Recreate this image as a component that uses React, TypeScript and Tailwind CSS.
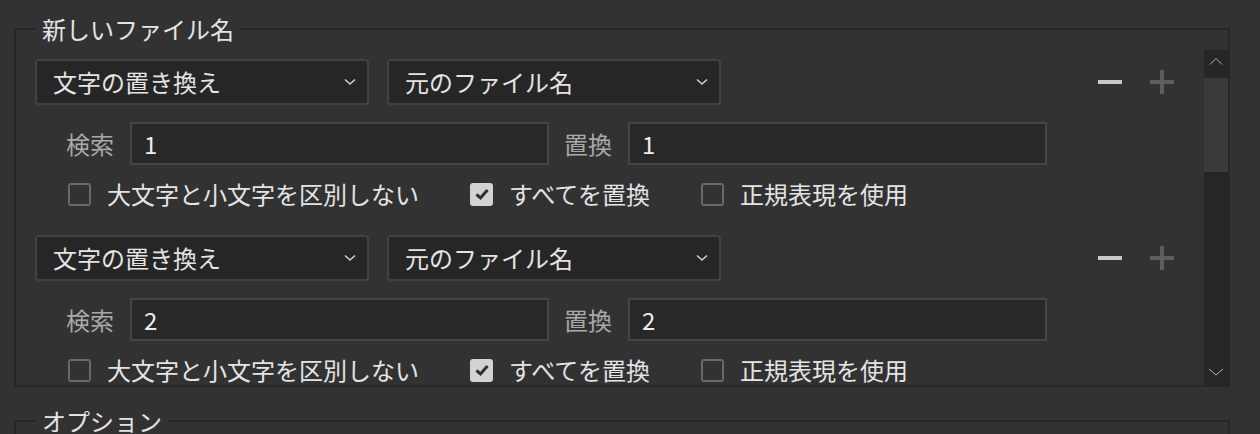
import { useState } from "react";

type Rule = { find: string; replace: string };

const font = { fontFamily: '"Noto Sans CJK JP", "Noto Sans", sans-serif' };

function Chevron() {
  return (
    <svg width="12" height="8" viewBox="0 0 12 8" className="shrink-0">
      <path d="M1 1.5 L6 6 L11 1.5" fill="none" stroke="#cfcfcf" strokeWidth="1.6" />
    </svg>
  );
}

function Select({ label }: { label: string }) {
  return (
    <div className="flex h-[46px] w-[334px] items-center justify-between rounded-[4px] border-2 border-[#424242] bg-[#262626] pl-[16px] pr-[11px] text-[24px] leading-none text-[#e4e4e4]">
      <span>{label}</span>
      <Chevron />
    </div>
  );
}

function TextField({ label, value }: { label: string; value: string }) {
  return (
    <div className="flex items-center">
      <span className="w-[48px] text-[24px] leading-none text-[#a9a9a9]">{label}</span>
      <div className="ml-[16px] flex h-[43px] w-[419px] items-center border-2 border-[#454545] bg-[#282828] pl-[12px] text-[24px] leading-none text-[#ececec]">
        {value}
      </div>
    </div>
  );
}

function Check({ label, checked }: { label: string; checked: boolean }) {
  return (
    <div className="flex items-center gap-[16px]">
      {checked ? (
        <div className="flex h-[23px] w-[23px] items-center justify-center rounded-[3px] bg-[#d2d2d2]">
          <svg width="16" height="14" viewBox="0 0 16 14">
            <path d="M2.5 7.5 L6.5 11 L13.5 3" fill="none" stroke="#2f2f2f" strokeWidth="3" />
          </svg>
        </div>
      ) : (
        <div className="h-[23px] w-[23px] rounded-[3px] border-2 border-[#686868]" />
      )}
      <span className="text-[24px] leading-[24px] text-[#e4e4e4]">{label}</span>
    </div>
  );
}

function RuleRow({ rule }: { rule: Rule }) {
  return (
    <div className="flex flex-col">
      <div className="flex items-center">
        <Select label="文字の置き換え" />
        <div className="ml-[18px]">
          <Select label="元のファイル名" />
        </div>
        <div className="ml-auto flex items-center gap-[28px] pr-[30px]">
          <svg width="24" height="24" viewBox="0 0 24 24">
            <rect x="0" y="10" width="24" height="4" fill="#c8c8c8" />
          </svg>
          <svg width="24" height="24" viewBox="0 0 24 24">
            <rect x="0" y="10" width="24" height="4" fill="#5e5e5e" />
            <rect x="10" y="0" width="4" height="24" fill="#5e5e5e" />
          </svg>
        </div>
      </div>
      <div className="mt-[17px] flex items-center gap-[15px] pl-[31px]">
        <TextField label="検索" value={rule.find} />
        <TextField label="置換" value={rule.replace} />
      </div>
      <div className="mt-[17px] flex items-center gap-[51px] pl-[33px]">
        <Check label="大文字と小文字を区別しない" checked={false} />
        <Check label="すべてを置換" checked />
        <Check label="正規表現を使用" checked={false} />
      </div>
    </div>
  );
}

function Scrollbar() {
  return (
    <div className="flex w-[24px] shrink-0 flex-col bg-[#262626]">
      <div className="flex h-[28px] items-start justify-center pt-[7px]">
        <svg width="14" height="8" viewBox="0 0 14 8">
          <path d="M1 7.5 L7 1.5 L13 7.5" fill="none" stroke="#b5b5b5" strokeWidth="1" />
        </svg>
      </div>
      <div className="h-[94px] bg-[#3a3a3a]" />
      <div className="flex-1" />
      <div className="flex h-[17px] items-start justify-center">
        <svg width="16" height="8" viewBox="0 0 16 8">
          <path d="M1 1 L8 7 L15 1" fill="none" stroke="#b5b5b5" strokeWidth="1" />
        </svg>
      </div>
    </div>
  );
}

export default function App() {
  const [rules] = useState<Rule[]>([
    { find: "1", replace: "1" },
    { find: "2", replace: "2" },
  ]);

  return (
    <div className="h-[434px] w-[1260px] overflow-hidden bg-[#323232] pt-[17px]" style={font}>
      <fieldset className="ml-[14px] w-[1216px] border-2 border-[#262626] pt-[9px]">
        <legend className="ml-[19px] px-[7px] text-[24px] leading-[24px] text-[#e4e4e4]">
          新しいファイル名
        </legend>
        <div className="flex h-[335px]">
          <div className="flex flex-1 flex-col gap-[29px] pl-[19px] pt-[9px]">
            {rules.map((r, i) => (
              <RuleRow key={i} rule={r} />
            ))}
          </div>
          <Scrollbar />
        </div>
      </fieldset>

      <fieldset className="ml-[14px] mt-[22px] h-[80px] w-[1216px] border-2 border-[#262626]">
        <legend className="ml-[19px] px-[7px] text-[24px] leading-[24px] text-[#e4e4e4]">
          オプション
        </legend>
      </fieldset>
    </div>
  );
}
